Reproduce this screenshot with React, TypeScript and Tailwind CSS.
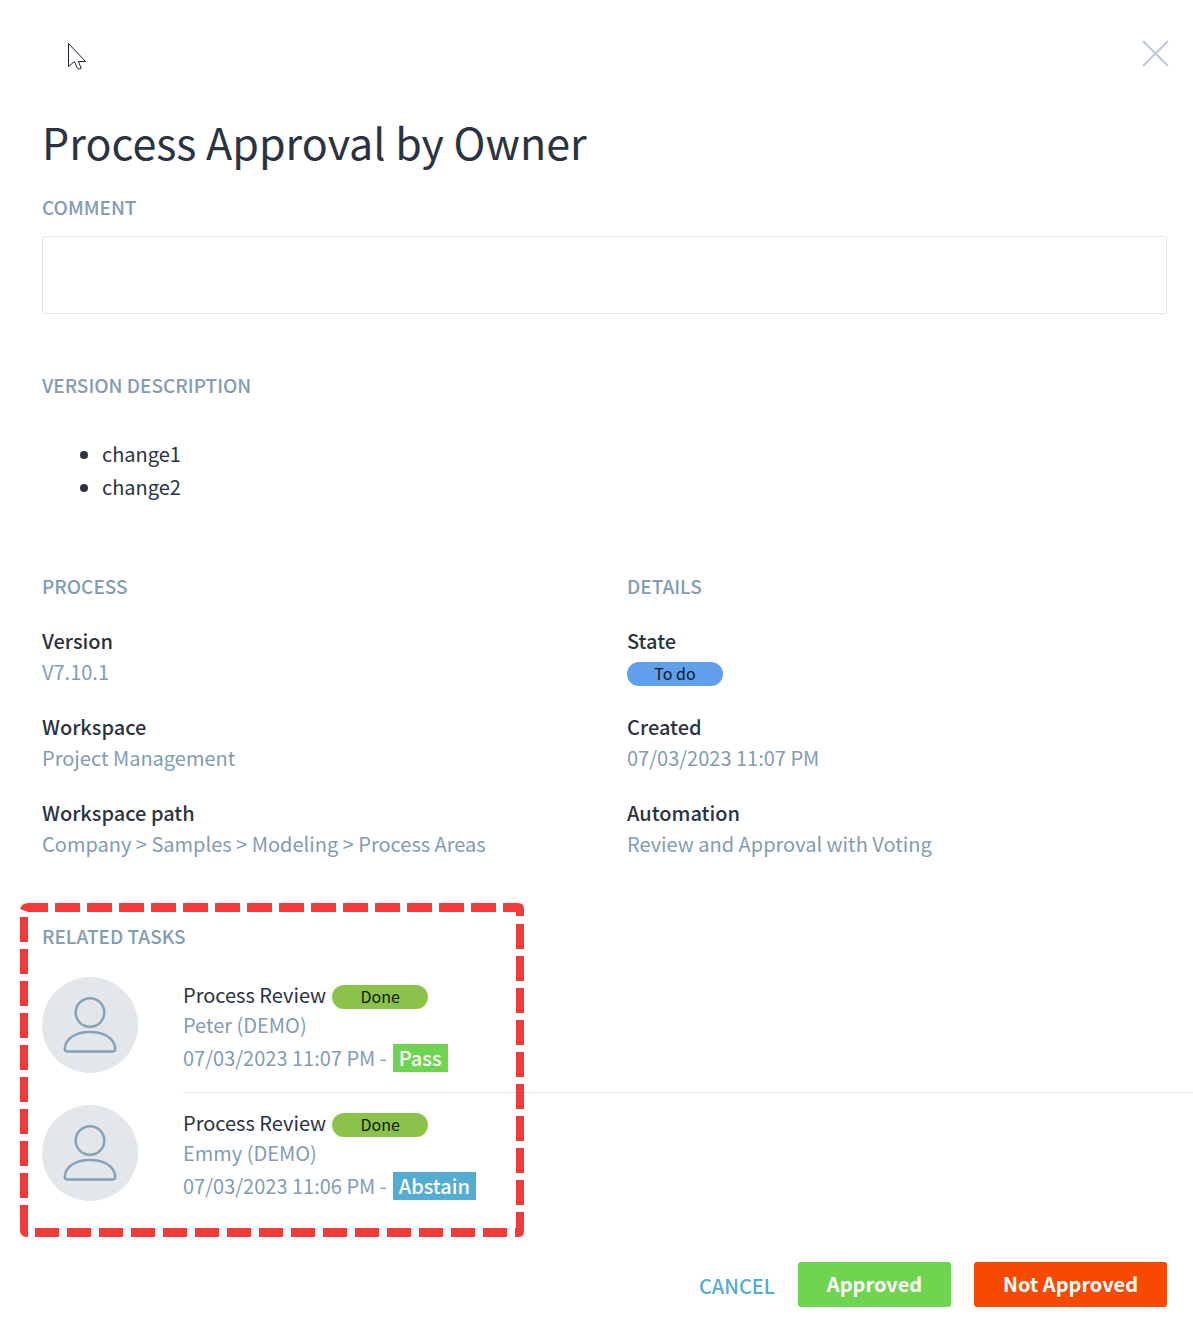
import { useState } from "react";

interface Field {
  label: string;
  value: string;
  badge?: boolean;
}

interface Task {
  title: string;
  status: string;
  assignee: string;
  date: string;
  vote: "Pass" | "Abstain";
}

const processFields: Field[] = [
  { label: "Version", value: "V7.10.1" },
  { label: "Workspace", value: "Project Management" },
  { label: "Workspace path", value: "Company > Samples > Modeling > Process Areas" },
];

const detailFields: Field[] = [
  { label: "State", value: "To do", badge: true },
  { label: "Created", value: "07/03/2023 11:07 PM" },
  { label: "Automation", value: "Review and Approval with Voting" },
];

const tasks: Task[] = [
  {
    title: "Process Review",
    status: "Done",
    assignee: "Peter (DEMO)",
    date: "07/03/2023 11:07 PM",
    vote: "Pass",
  },
  {
    title: "Process Review",
    status: "Done",
    assignee: "Emmy (DEMO)",
    date: "07/03/2023 11:06 PM",
    vote: "Abstain",
  },
];

const voteColors = {
  Pass: "bg-[#6fd550]",
  Abstain: "bg-[#54acd2]",
};

const headingClass = "text-[19px] leading-7 font-medium text-[#829cb3]";

function Avatar() {
  return (
    <div className="size-24 shrink-0 rounded-full bg-[#e3e7ec]">
      <svg
        viewBox="0 0 96 96"
        className="size-24"
        fill="none"
        stroke="#87a2b8"
        strokeWidth="2.5"
        aria-hidden="true"
      >
        <circle cx="48" cy="35.5" r="14.3" />
        <path d="M25.5 74.5H70.5Q73.3 74.5 73.2 71.2C72.3 60.8 61.5 55 48 55S23.7 60.8 22.8 71.2Q22.7 74.5 25.5 74.5Z" />
      </svg>
    </div>
  );
}

function Cursor() {
  return (
    <svg
      viewBox="0 0 19 28"
      className="absolute top-[43px] left-[68px] h-7 w-[19px]"
      aria-hidden="true"
    >
      <path
        d="M.5.5V23.5L6.5 18.5L9.3 25.2Q11 27 13.2 25.2L10.3 18.5H17.5Z"
        fill="#fff"
        stroke="#1d2030"
      />
    </svg>
  );
}

// Dashed marker around the related tasks
function Highlight() {
  return (
    <svg
      viewBox="0 0 504 334"
      className="pointer-events-none absolute top-[-19px] left-5 h-[334px] w-[504px]"
      fill="none"
      stroke="#f33a3a"
      aria-hidden="true"
    >
      <path d="M35 4.5H482" strokeWidth="9" strokeDasharray="25 7" />
      <path d="M15 329.5H490" strokeWidth="9" strokeDasharray="24 8" />
      <path d="M4 14V300" strokeWidth="8" strokeDasharray="25 7" />
      <path d="M500 21V305" strokeWidth="8" strokeDasharray="25 7" />
      <g fill="#f33a3a" stroke="none">
        <path d="M0 6Q2 0 8 0H28V9H8Z" />
        <path d="M483 0H498Q504 0 504 6V13H496V9H483Z" />
        <path d="M0 302H8V334H6Q0 333 0 327Z" />
        <path d="M496 309H504V328Q504 334 498 334H495V325H496Z" />
      </g>
    </svg>
  );
}

function FieldList({ title, fields }: { title: string; fields: Field[] }) {
  return (
    <section>
      <h2 className={headingClass}>{title}</h2>
      <dl className="mt-[25px] flex flex-col gap-6">
        {fields.map((field) => (
          <div key={field.label} className="h-[62px]">
            <dt className="text-[20px] leading-[31px] font-medium text-[#2a333f]">
              {field.label}
            </dt>
            <dd className="text-[20px] leading-[31px] text-[#829cb3]">
              {field.badge ? (
                <span className="mt-[6px] block h-6 w-24 rounded-full bg-[#609fec] text-center text-[16px] leading-[22px] text-[#111a24]">
                  {field.value}
                </span>
              ) : (
                field.value
              )}
            </dd>
          </div>
        ))}
      </dl>
    </section>
  );
}

function TaskRow({ task }: { task: Task }) {
  return (
    <li className="group flex gap-[45px] pl-[42px] not-first:-mt-1">
      <div className="pt-4 pb-5">
        <Avatar />
      </div>
      <div className="grow border-b border-[#e3e6ea] pt-[19px] text-[20px] leading-[30px] text-[#829cb3] group-last:border-0">
        <div className="flex items-center gap-[6px] text-[#2a333f]">
          {task.title}
          <span className="mt-1 h-6 w-24 rounded-full bg-[#8bc34a] text-center text-[16px] leading-[22px] text-[#101a08]">
            {task.status}
          </span>
        </div>
        <div>{task.assignee}</div>
        <div className="flex items-center gap-[6px] pt-[3px]">
          {task.date} -
          <span
            className={`h-7 px-[6px] leading-7 font-medium text-white ${voteColors[task.vote]}`}
          >
            {task.vote}
          </span>
        </div>
      </div>
    </li>
  );
}

export default function App() {
  const [comment, setComment] = useState("");

  return (
    <main className="relative bg-white pb-7 font-['Noto_Sans_CJK_SC','Noto_Sans',sans-serif] text-[#2a333f]">
      <Cursor />

      <div className="flex justify-end pt-10 pr-6">
        <button type="button" aria-label="Close" className="h-[27px]">
          <svg viewBox="0 0 27 27" className="size-[27px]" stroke="#bdcada" strokeWidth="2">
            <path d="M1 1L26 26M26 1L1 26" />
          </svg>
        </button>
      </div>

      <div className="pr-[26px] pl-[42px]">
        <h1 className="pt-[42px] text-[43px] leading-[64px]">Process Approval by Owner</h1>

        <label htmlFor="comment" className={`mt-5 block ${headingClass}`}>
          COMMENT
        </label>
        <textarea
          id="comment"
          value={comment}
          onChange={(e) => setComment(e.target.value)}
          className="mt-[15px] block h-[78px] w-full resize-none rounded-[3px] border border-[#e3e6ea] p-3 text-[20px]"
        />

        <h2 className={`mt-[57px] ${headingClass}`}>VERSION DESCRIPTION</h2>
        <ul className="mt-[38px] list-disc pl-[60px] text-[20px] leading-[33px]">
          <li>change1</li>
          <li>change2</li>
        </ul>

        <div className="mt-[69px] grid grid-cols-2 gap-[45px]">
          <FieldList title="PROCESS" fields={processFields} />
          <FieldList title="DETAILS" fields={detailFields} />
        </div>
      </div>

      <section className="relative mt-[63px]">
        <Highlight />
        <h2 className={`pl-[42px] ${headingClass}`}>RELATED TASKS</h2>
        <ul className="mt-[11px]">
          {tasks.map((task) => (
            <TaskRow key={task.assignee} task={task} />
          ))}
        </ul>
      </section>

      <footer className="mt-[41px] flex items-center justify-end gap-[23px] pr-[26px] text-[20px]">
        <button type="button" className="pt-[2px] font-medium text-[#54acd2]">
          CANCEL
        </button>
        <button type="button" className="h-[45px] w-[153px] rounded-[3px] bg-[#6fd550] pb-[2px] font-bold text-white">
          Approved
        </button>
        <button type="button" className="h-[45px] w-[193px] rounded-[3px] bg-[#f64a00] pb-[2px] font-bold text-white">
          Not Approved
        </button>
      </footer>
    </main>
  );
}
